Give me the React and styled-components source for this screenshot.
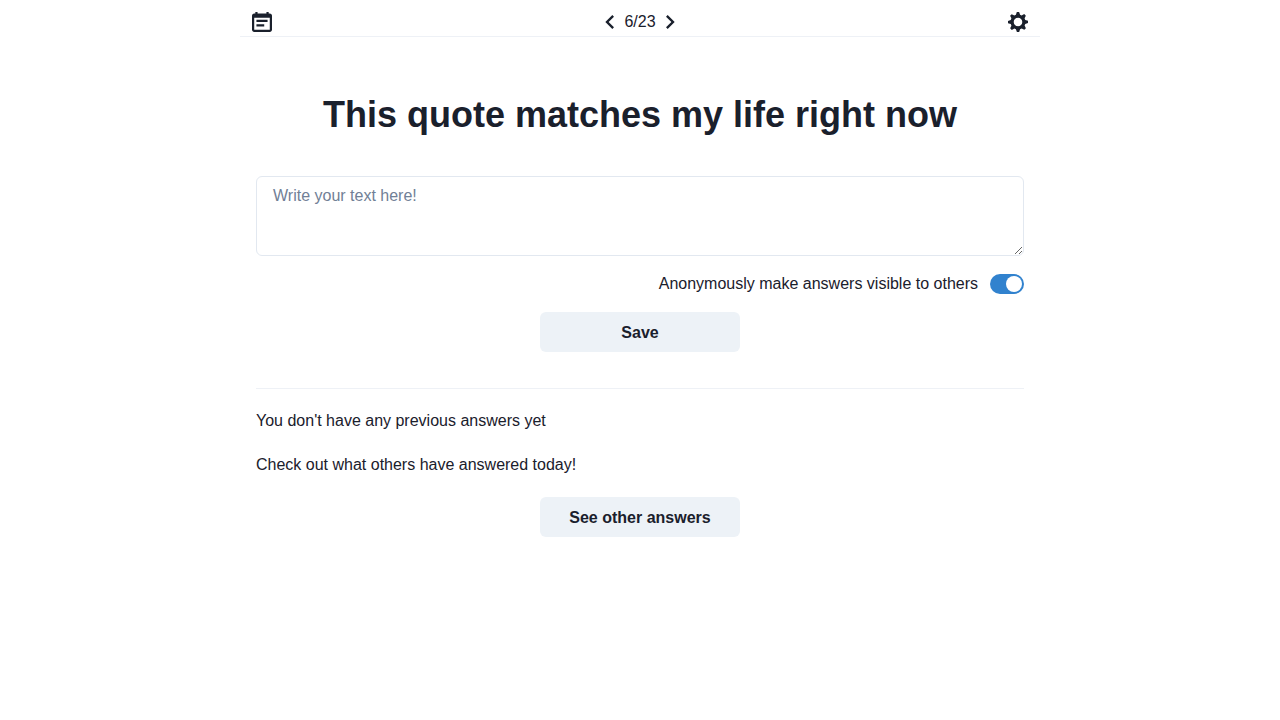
import React, { useState } from "react";
import styled, { createGlobalStyle } from "styled-components";

const GlobalStyle = createGlobalStyle`
  *, *::before, *::after { box-sizing: border-box; }
  body {
    margin: 0;
    background: #ffffff;
    color: #1a202c;
    font-family: "Liberation Sans", Arial, sans-serif;
    font-size: 16px;
    line-height: 24px;
  }
  h1, p { margin: 0; }
  button, textarea { font: inherit; color: inherit; }
`;

const Page = styled.div`
  max-width: 800px;
  margin: 0 auto;
`;

const Header = styled.header`
  display: grid;
  grid-template-columns: 1fr auto 1fr;
  align-items: center;
  padding: 8px 12px 0;
`;

const Pager = styled.nav`
  display: flex;
  align-items: center;
`;

const PageCount = styled.span`
  min-width: 32px;
  text-align: center;
`;

const IconButton = styled.button`
  display: flex;
  padding: 0;
  border: 0;
  background: none;
  cursor: pointer;
  justify-self: ${({ $align }) => $align || "start"};
`;

const Icon = styled.svg`
  display: block;
  width: ${({ $size }) => $size}px;
  height: ${({ $size }) => $size}px;
  fill: currentColor;
`;

const Main = styled.main`
  display: flex;
  flex-direction: column;
  padding: 56px 16px 16px;
`;

const Title = styled.h1`
  font-size: 36px;
  line-height: 43px;
  font-weight: 700;
  text-align: center;
`;

const Form = styled.form`
  display: flex;
  flex-direction: column;
  margin-top: 40px;
`;

const AnswerBox = styled.textarea`
  display: block;
  width: 100%;
  min-height: 80px;
  padding: 8px 16px;
  line-height: 22px;
  border: 1px solid #e2e8f0;
  border-radius: 6px;
  background: transparent;
  resize: vertical;
  outline: none;
  &::placeholder { color: #718096; opacity: 1; }
  &:focus { border-color: #3182ce; }
`;

const SwitchRow = styled.div`
  display: flex;
  align-items: center;
  justify-content: flex-end;
  gap: 12px;
  margin: 16px 0;
`;

const Switch = styled.input`
  appearance: none;
  display: flex;
  width: 34px;
  height: 20px;
  margin: 0;
  padding: 2px;
  border-radius: 10px;
  background: #cbd5e0;
  cursor: pointer;
  &::before {
    content: "";
    width: 16px;
    height: 16px;
    border-radius: 50%;
    background: #ffffff;
  }
  &:checked {
    justify-content: flex-end;
    background: #3182ce;
  }
`;

const Button = styled.button`
  display: flex;
  align-items: center;
  justify-content: center;
  align-self: center;
  width: 200px;
  height: 40px;
  padding: 2px 16px 0;
  border: 0;
  border-radius: 6px;
  background: #edf2f7;
  font-weight: 700;
  cursor: pointer;
  &:hover { background: #e2e8f0; }
`;

const Divider = styled.hr`
  width: 100%;
  margin: ${({ $top }) => $top || 0}px 0 0;
  border: 0;
  border-top: 1px solid #e2e8f0;
  opacity: 0.6;
`;

const Answers = styled.section`
  display: flex;
  flex-direction: column;
  gap: 20px;
  margin-top: 20px;
`;

function CalendarIcon() {
  return (
    <Icon $size={20} viewBox="0 0 14 14" aria-hidden="true">
      <path d="M10.8889,5.5 L3.11111,5.5 L3.11111,7.05556 L10.8889,7.05556 L10.8889,5.5 Z M12.4444,1.05556 L11.6667,1.05556 L11.6667,0 L10.1111,0 L10.1111,1.05556 L3.88889,1.05556 L3.88889,0 L2.33333,0 L2.33333,1.05556 L1.55556,1.05556 C0.692222,1.05556 0.00777777,1.75556 0.00777777,2.61111 L0,12.5 C0,13.3556 0.692222,14 1.55556,14 L12.4444,14 C13.3,14 14,13.3556 14,12.5 L14,2.61111 C14,1.75556 13.3,1.05556 12.4444,1.05556 Z M12.4444,12.5 L1.55556,12.5 L1.55556,3.94444 L12.4444,3.94444 L12.4444,12.5 Z M8.55556,8.61111 L3.11111,8.61111 L3.11111,10.1667 L8.55556,10.1667 L8.55556,8.61111 Z" />
    </Icon>
  );
}

function SettingsIcon() {
  return (
    <Icon $size={20} viewBox="0 0 14 14" aria-hidden="true">
      <path d="M14,7.77 L14,6.17 L12.06,5.53 L11.61,4.44 L12.49,2.6 L11.36,1.47 L9.55,2.38 L8.46,1.93 L7.77,0.01 L6.17,0.01 L5.54,1.95 L4.43,2.4 L2.59,1.52 L1.46,2.65 L2.37,4.46 L1.92,5.55 L0,6.23 L0,7.82 L1.94,8.46 L2.39,9.55 L1.51,11.39 L2.64,12.52 L4.45,11.61 L5.54,12.06 L6.23,13.98 L7.82,13.98 L8.45,12.04 L9.56,11.59 L11.4,12.47 L12.53,11.34 L11.61,9.53 L12.08,8.44 L14,7.75 L14,7.77 Z M7,10 C5.34,10 4,8.66 4,7 C4,5.34 5.34,4 7,4 C8.66,4 10,5.34 10,7 C10,8.66 8.66,10 7,10 Z" />
    </Icon>
  );
}

function ChevronLeftIcon() {
  return (
    <Icon $size={28} viewBox="0 0 24 24" aria-hidden="true">
      <path d="M15.41 7.41L14 6l-6 6 6 6 1.41-1.41L10.83 12z" />
    </Icon>
  );
}

function ChevronRightIcon() {
  return (
    <Icon $size={28} viewBox="0 0 24 24" aria-hidden="true">
      <path d="M10 6L8.59 7.41 13.17 12l-4.58 4.59L10 18l6-6z" />
    </Icon>
  );
}

export default function App() {
  const [answer, setAnswer] = useState("");
  const [visible, setVisible] = useState(true);

  return (
    <>
      <GlobalStyle />
      <Page>
        <Header>
          <IconButton type="button" aria-label="Calendar">
            <CalendarIcon />
          </IconButton>
          <Pager aria-label="Questions">
            <IconButton type="button" aria-label="Previous question">
              <ChevronLeftIcon />
            </IconButton>
            <PageCount>6/23</PageCount>
            <IconButton type="button" aria-label="Next question">
              <ChevronRightIcon />
            </IconButton>
          </Pager>
          <IconButton type="button" aria-label="Settings" $align="end">
            <SettingsIcon />
          </IconButton>
        </Header>
        <Divider />
        <Main>
          <Title id="question">This quote matches my life right now</Title>
          <Form onSubmit={(event) => event.preventDefault()}>
            <AnswerBox
              aria-labelledby="question"
              placeholder="Write your text here!"
              value={answer}
              onChange={(event) => setAnswer(event.target.value)}
            />
            <SwitchRow>
              <label htmlFor="visible">Anonymously make answers visible to others</label>
              <Switch
                id="visible"
                type="checkbox"
                role="switch"
                checked={visible}
                onChange={(event) => setVisible(event.target.checked)}
              />
            </SwitchRow>
            <Button type="submit">Save</Button>
          </Form>
          <Divider $top={36} />
          <Answers>
            <p>You don't have any previous answers yet</p>
            <p>Check out what others have answered today!</p>
            <Button type="button">See other answers</Button>
          </Answers>
        </Main>
      </Page>
    </>
  );
}
